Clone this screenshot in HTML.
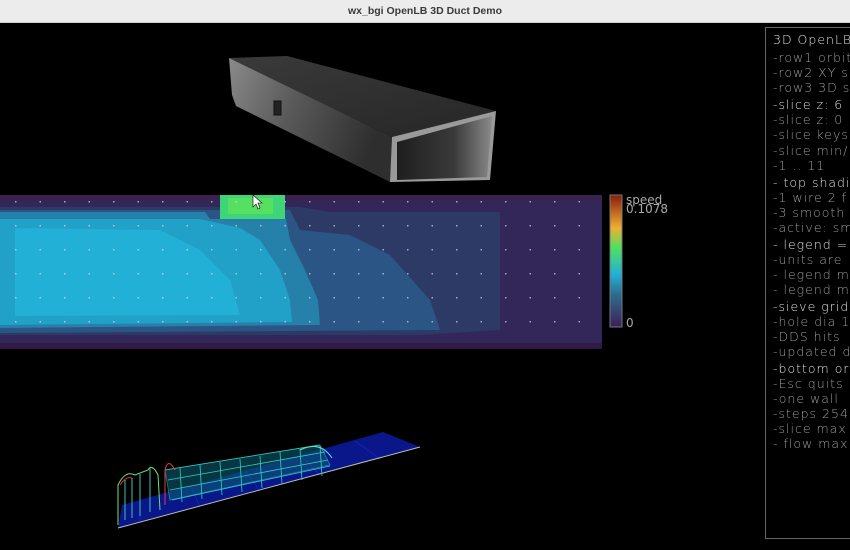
<!DOCTYPE html>
<html><head><meta charset="utf-8"><style>
html,body{margin:0;padding:0;background:#000;width:850px;height:550px;overflow:hidden;position:relative}
#tb{position:absolute;left:0;top:0;width:850px;height:22px;background:#ececec;border-bottom:1px solid #d0d0d0;font:bold 10.5px "Liberation Sans",sans-serif;color:#3a3a3a;text-align:center;line-height:23px}
#panel{position:absolute;left:765px;top:27px;width:100px;height:510px;border:1px solid #666;}
.t{position:absolute;left:7px;font:300 12.5px "DejaVu Sans","Liberation Sans",sans-serif;color:#9a9a9a;white-space:nowrap;letter-spacing:1px}
.b{color:#e0e0e0}
.lab{position:absolute;font:12px "DejaVu Sans",sans-serif;color:#aaa}
</style></head><body>
<div id="tb">wx_bgi OpenLB 3D Duct Demo</div>
<svg width="850" height="550" style="position:absolute;left:0;top:0">
<defs>
<linearGradient id="side" x1="0" y1="0" x2="1" y2="0.3"><stop offset="0" stop-color="#8a8a8a"/><stop offset="0.45" stop-color="#5a5a5a"/><stop offset="1" stop-color="#2e2e2e"/></linearGradient>
<linearGradient id="top" x1="0" y1="0" x2="1" y2="1"><stop offset="0" stop-color="#3a3a3a"/><stop offset="1" stop-color="#262626"/></linearGradient>
<linearGradient id="end" x1="0" y1="0" x2="1" y2="0"><stop offset="0" stop-color="#1e1e1e"/><stop offset="0.6" stop-color="#3a3a3a"/><stop offset="1" stop-color="#8a8a8a"/></linearGradient>
<linearGradient id="cb" x1="0" y1="1" x2="0" y2="0"><stop offset="0" stop-color="#3b1f5a"/><stop offset="0.25" stop-color="#2c6e8e"/><stop offset="0.4" stop-color="#22b0d8"/><stop offset="0.6" stop-color="#4fe060"/><stop offset="0.75" stop-color="#f0b030"/><stop offset="1" stop-color="#8a1a10"/></linearGradient>
<pattern id="dots" x="15" y="225" width="24.5" height="24" patternUnits="userSpaceOnUse"><rect x="0" y="0" width="1.5" height="1.5" fill="#ddd" opacity="0.7"/></pattern>
</defs>
<!-- duct -->
<polygon points="229,58 287,56 496,111 392,137" fill="url(#top)"/>
<polygon points="229,58 392,137 390,182 236,106 232,95" fill="url(#side)"/>
<polygon points="392,137 496,111 490,180 390,182" fill="#9a9a9a"/>
<polygon points="397,142 492,116 487,177 397,180" fill="url(#end)"/>
<rect x="274" y="101" width="7" height="14" fill="#222" stroke="#111"/>
<!-- heatmap -->
<rect x="0" y="195" width="602" height="154" fill="#3a2150"/>
<rect x="0" y="200" width="602" height="143" fill="#33275a"/>
<polygon points="0,207 300,207 330,212 500,212 500,330 420,335 0,335" fill="#2d3a66"/>
<polygon points="0,210 290,210 300,230 350,235 390,255 430,300 440,330 0,333" fill="#2a5584"/>
<polygon points="0,212 205,212 210,219 286,219 290,240 305,270 318,300 320,325 0,328" fill="#2580aa"/>
<polygon points="0,219 200,219 240,228 260,240 280,270 290,300 292,322 0,325" fill="#21a0c8"/>
<polygon points="15,228 160,230 200,250 230,280 240,315 15,316" fill="#22b0d6"/>
<rect x="220" y="195" width="65" height="24" fill="#3fd37a"/>
<rect x="228" y="198" width="45" height="16" fill="#55e060"/>
<rect x="0" y="195" width="602" height="154" fill="url(#dots)"/>
<rect x="0" y="343" width="602" height="6" fill="#2f1b45"/>
<!-- cursor -->
<polygon points="253,195 253,207 256,204 258,209 260,208 258,203 262,203" fill="#fff" stroke="#000" stroke-width="0.6"/>
<!-- colorbar -->
<rect x="610" y="195" width="12" height="132" fill="url(#cb)" stroke="#777" stroke-width="1"/>
<!-- wireframe -->
<polygon points="118,528 420,447 383,432 122,505" fill="#0a1a9a" opacity="0.9"/>
<g stroke="#2030d0" stroke-width="0.6" opacity="0.8">
<line x1="140" y1="523" x2="140" y2="500"/><line x1="200" y1="507" x2="190" y2="484"/><line x1="260" y1="491" x2="245" y2="470"/><line x1="320" y1="475" x2="300" y2="455"/><line x1="380" y1="459" x2="355" y2="441"/>
</g>
<line x1="118" y1="528" x2="420" y2="447" stroke="#bbb" stroke-width="1"/>
<g fill="none" stroke="#30d0c0" stroke-width="0.8">
<polygon points="165,470 320,445 330,465 170,500" fill="#0d5a70" opacity="0.6"/>
<path d="M165,470 L320,445 M168,480 L325,452 M170,490 L328,460 M172,500 L330,466"/>
<path d="M180,468 L182,502 M200,465 L202,499 M220,462 L222,495 M240,459 L242,492 M260,456 L262,488 M280,452 L282,484 M300,449 L302,480 M320,446 L322,476"/>
</g>
<g fill="none" stroke-width="1">
<path d="M118,525 L118,485 Q125,470 135,475 L148,470 Q152,463 158,475 L160,510" stroke="#70e070"/>
<path d="M120,485 Q126,476 132,478" stroke="#e03030"/>
<path d="M165,505 L165,470 Q168,457 175,470" stroke="#e04040"/>
<path d="M125,480 L125,520 M132,478 L132,518 M140,474 L140,516 M150,468 L150,512" stroke="#40c0b0"/>
<path d="M300,450 Q320,440 332,458" stroke="#60e0d0"/>
</g>
</svg>
<div class="lab" style="left:626px;top:193px">speed</div>
<div class="lab" style="left:626px;top:202px">0.1078</div>
<div class="lab" style="left:626px;top:316px">0</div>
<div id="panel">
<div class="t b" style="top:4px">3D OpenLB</div>
<div class="t" style="top:22px">-row1 orbit</div>
<div class="t" style="top:37px">-row2 XY sl</div>
<div class="t" style="top:52px">-row3 3D sl</div>
<div class="t b" style="top:69px">-slice z: 6</div>
<div class="t" style="top:84px">-slice z: 0</div>
<div class="t" style="top:99px">-slice keys</div>
<div class="t" style="top:115px">-slice min/</div>
<div class="t" style="top:130px">-1 .. 11</div>
<div class="t b" style="top:147px">- top shadi</div>
<div class="t" style="top:162px">-1 wire 2 f</div>
<div class="t" style="top:177px">-3 smooth</div>
<div class="t" style="top:192px">-active: sm</div>
<div class="t b" style="top:209px">- legend = s</div>
<div class="t" style="top:224px">-units are</div>
<div class="t" style="top:239px">- legend mi</div>
<div class="t" style="top:254px">- legend ma</div>
<div class="t b" style="top:271px">-sieve grid</div>
<div class="t" style="top:286px">-hole dia 1</div>
<div class="t" style="top:301px">-DDS hits</div>
<div class="t" style="top:316px">-updated d</div>
<div class="t b" style="top:333px">-bottom or</div>
<div class="t" style="top:348px">-Esc quits</div>
<div class="t" style="top:363px">-one wall</div>
<div class="t" style="top:378px">-steps 254</div>
<div class="t" style="top:393px">-slice max</div>
<div class="t" style="top:408px">- flow max</div>
</div>
</body></html>
